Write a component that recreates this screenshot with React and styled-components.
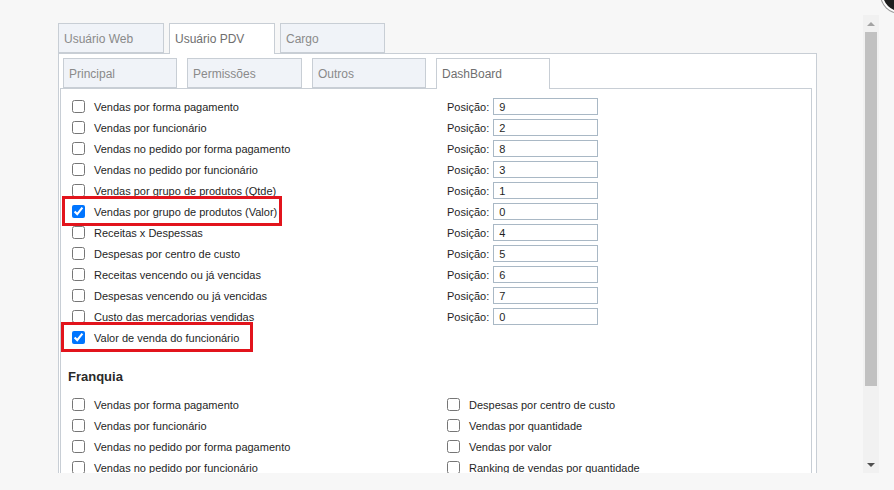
import styled, { createGlobalStyle } from "styled-components";

const GlobalStyle = createGlobalStyle`
  html, body {
    margin: 0;
    padding: 0;
    background: #f7f7f7;
    font-family: "Liberation Sans", Arial, sans-serif;
  }
  * { box-sizing: border-box; }
`;

const Screen = styled.div`
  position: relative;
  height: 490px;
  overflow: hidden;
  background: #f7f7f7;
`;

const Frame = styled.div`
  display: flex;
  height: 473px;
  padding-top: 15px;
`;

const Viewport = styled.div`
  flex: 1;
  overflow: hidden;
  padding: 8px 0 0 58px;
`;

const Scrollbar = styled.div`
  width: 16px;
  margin-right: 15px;
  background: #f1f1f1;
  display: flex;
  flex-direction: column;
  align-items: center;
`;

const ArrowButton = styled.div`
  height: 17px;
  width: 100%;
  display: flex;
  align-items: center;
  justify-content: center;
  flex: none;

  &::before {
    content: "";
    border-left: 4px solid transparent;
    border-right: 4px solid transparent;
    ${(p) =>
      p.$down
        ? `border-top: 4px solid ${p.$dim ? "#a3a3a3" : "#505050"};`
        : `border-bottom: 4px solid ${p.$dim ? "#a3a3a3" : "#505050"};`}
  }
`;

const Thumb = styled.div`
  width: 12px;
  height: 354px;
  background: #c1c1c1;
  flex: none;
`;

const Track = styled.div`
  flex: 1;
`;

const CloseButton = styled.div`
  position: absolute;
  left: 881px;
  top: -25px;
  width: 38px;
  height: 38px;
  border-radius: 50%;
  background: #1e1e1e;
  border: 2px solid #ffffff;
  box-shadow: 0 0 0 1px #9a9a9a;
`;

const TabBar = styled.div`
  display: flex;
  align-items: flex-end;
  gap: ${(p) => p.$gap}px;
  padding-left: ${(p) => p.$indent}px;
  height: 30px;
`;

const Tab = styled.div`
  width: ${(p) => p.$width}px;
  height: ${(p) => (p.$active ? 31 : 30)}px;
  margin-bottom: ${(p) => (p.$active ? -1 : 0)}px;
  position: relative;
  z-index: 1;
  background: ${(p) => (p.$active ? "#ffffff" : "#f0f3f8")};
  border: 1px solid #c8ced5;
  border-bottom: ${(p) => (p.$active ? "none" : "1px solid #c8ced5")};
  color: ${(p) => (p.$active ? "#6f6f6f" : "#8a8a8a")};
  font-size: 12px;
  line-height: 29px;
  padding: 1px 0 0 5px;
  white-space: nowrap;
`;

const Panel = styled.div`
  width: 759px;
  background: #ffffff;
  border: 1px solid #c8ced5;
  padding-top: 4px;
  height: 600px;
`;

const InnerPanel = styled.div`
  margin: 0 4px 0 1px;
  border: 1px solid #c8ced5;
  border-bottom: none;
  padding: 7px 0 0 11px;
  height: 560px;
`;

const Rows = styled.div`
  display: grid;
  grid-template-columns: 375px 1fr;
  grid-auto-rows: 21px;
`;

const CheckLabel = styled.label`
  position: relative;
  display: inline-flex;
  align-items: center;
  align-self: stretch;
  justify-self: start;
  gap: 9px;
  font-size: 11px;
  color: #1f1f1f;
  white-space: nowrap;

  input {
    margin: 0;
    width: 13px;
    height: 13px;
  }
`;

const Highlight = styled.span`
  position: absolute;
  top: -5px;
  bottom: -4px;
  left: ${(p) => -p.$left}px;
  right: ${(p) => -p.$right}px;
  border: 3px solid #e2141c;
  z-index: 2;
  pointer-events: none;
`;

const PositionField = styled.div`
  display: flex;
  align-items: center;
  gap: 4px;
  font-size: 11px;
  color: #1f1f1f;
`;

const PositionInput = styled.input`
  width: 105px;
  height: 17px;
  border: 1px solid #a9b8c5;
  padding: 0 5px;
  font-family: "Liberation Sans", Arial, sans-serif;
  font-size: 11px;
  color: #1f1f1f;
  outline: none;
`;

const SectionTitle = styled.h3`
  margin: 21px 0 9px -4px;
  font-size: 13px;
  line-height: 16px;
  font-weight: bold;
  color: #2a2a2a;
`;

const dashboard = [
  { label: "Vendas por forma pagamento", pos: "9" },
  { label: "Vendas por funcionário", pos: "2" },
  { label: "Vendas no pedido por forma pagamento", pos: "8" },
  { label: "Vendas no pedido por funcionário", pos: "3" },
  { label: "Vendas por grupo de produtos (Qtde)", pos: "1" },
  { label: "Vendas por grupo de produtos (Valor)", pos: "0", checked: true, mark: [10, 5] },
  { label: "Receitas x Despessas", pos: "4" },
  { label: "Despesas por centro de custo", pos: "5" },
  { label: "Receitas vencendo ou já vencidas", pos: "6" },
  { label: "Despesas vencendo ou já vencidas", pos: "7" },
  { label: "Custo das mercadorias vendidas", pos: "0" },
  { label: "Valor de venda do funcionário", checked: true, mark: [11, 14] },
];

const franquia = [
  ["Vendas por forma pagamento", "Despesas por centro de custo"],
  ["Vendas por funcionário", "Vendas por quantidade"],
  ["Vendas no pedido por forma pagamento", "Vendas por valor"],
  ["Vendas no pedido por funcionário", "Ranking de vendas por quantidade"],
];

function Check({ label, checked, mark }) {
  return (
    <CheckLabel>
      <input type="checkbox" defaultChecked={checked} />
      {label}
      {mark && <Highlight $left={mark[0]} $right={mark[1]} />}
    </CheckLabel>
  );
}

export default function App() {
  return (
    <Screen>
      <GlobalStyle />
      <Frame>
        <Viewport>
          <TabBar $gap={5} $indent={0}>
            <Tab $width={106}>Usuário Web</Tab>
            <Tab $width={106} $active>
              Usuário PDV
            </Tab>
            <Tab $width={105}>Cargo</Tab>
          </TabBar>
          <Panel>
            <TabBar $gap={10} $indent={4}>
              <Tab $width={114}>Principal</Tab>
              <Tab $width={115}>Permissões</Tab>
              <Tab $width={114}>Outros</Tab>
              <Tab $width={114} $active>
                DashBoard
              </Tab>
            </TabBar>
            <InnerPanel>
              <Rows>
                {dashboard.map((item) => (
                  <>
                    <Check key={item.label} {...item} />
                    {item.pos !== undefined ? (
                      <PositionField>
                        Posição:
                        <PositionInput defaultValue={item.pos} />
                      </PositionField>
                    ) : (
                      <div />
                    )}
                  </>
                ))}
              </Rows>
              <SectionTitle>Franquia</SectionTitle>
              <Rows>
                {franquia.map(([a, b]) => (
                  <>
                    <Check key={a} label={a} />
                    <Check key={b} label={b} />
                  </>
                ))}
              </Rows>
            </InnerPanel>
          </Panel>
        </Viewport>
        <Scrollbar>
          <ArrowButton $dim />
          <Thumb />
          <Track />
          <ArrowButton $down />
        </Scrollbar>
      </Frame>
      <CloseButton />
    </Screen>
  );
}
